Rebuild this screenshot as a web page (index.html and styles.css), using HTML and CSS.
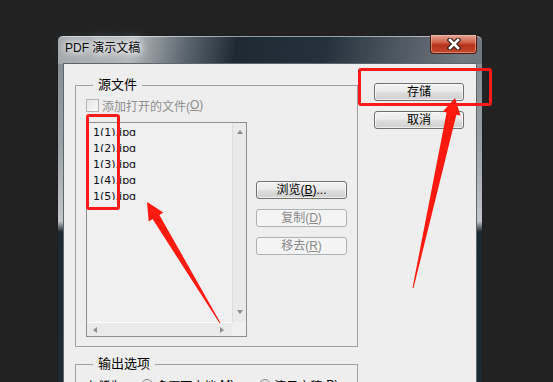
FILE: index.html
```html
<!DOCTYPE html>
<html lang="zh-CN">
<head>
    <meta charset="UTF-8">
    <meta name="viewport" content="width=device-width, initial-scale=1.0">
    <title>PDF 演示文稿</title>
    <link rel="stylesheet" href="styles.css">
</head>
<body>
    <div class="window">
        <div class="titlebar">
            <span class="title">PDF 演示文稿</span>
            <div class="close">
                <svg width="14" height="12" viewBox="0 0 14 12">
                    <path d="M3 2 L11 10 M11 2 L3 10" stroke="#3a2420" stroke-width="5" stroke-linecap="square"/>
                    <path d="M3 2 L11 10 M11 2 L3 10" stroke="#fff" stroke-width="2.6" stroke-linecap="square"/>
                </svg>
            </div>
        </div>
        <div class="client">
            <div class="groups">
                <fieldset class="group source">
                    <legend>源文件</legend>
                    <label class="check disabled"><span class="box"></span>添加打开的文件(<u>O</u>)</label>
                    <div class="source-row">
                        <div class="listbox">
                            <div class="items">
                                <div class="item">1(1).jpg</div>
                                <div class="item">1(2).jpg</div>
                                <div class="item">1(3).jpg</div>
                                <div class="item">1(4).jpg</div>
                                <div class="item">1(5).jpg</div>
                            </div>
                            <div class="vscroll"><span class="arrow up"></span><span class="arrow down"></span></div>
                            <div class="hscroll"><span class="arrow left"></span><span class="arrow right"></span></div>
                            <div class="corner"></div>
                        </div>
                        <div class="side-buttons">
                            <button class="btn">浏览(<u>B</u>)...</button>
                            <button class="btn" disabled>复制(<u>D</u>)</button>
                            <button class="btn" disabled>移去(<u>R</u>)</button>
                        </div>
                    </div>
                </fieldset>
                <fieldset class="group output">
                    <legend>输出选项</legend>
                    <div class="radio-row">
                        <span>存储为:</span>
                        <label class="radio first"><span class="dot"></span>多页面文档(<u>M</u>)</label>
                        <label class="radio second"><span class="dot"></span>演示文稿(<u>P</u>)</label>
                    </div>
                </fieldset>
            </div>
            <div class="main-buttons">
                <button class="btn wide">存储</button>
                <button class="btn wide">取消</button>
            </div>
        </div>
    </div>

    <div class="mark mark-list"></div>
    <div class="mark mark-save"></div>
    <svg class="arrows" width="553" height="382" viewBox="0 0 553 382">
        <polygon fill="#ff1a10" points="147,202 163.3,212.6 159.4,214.9 220.4,322.7 219.6,323.3 152.6,219.1 148.7,221.4"/>
        <polygon fill="#ff1a10" points="455,98 460.5,115.5 456.4,114.7 413.5,288.1 412.5,287.9 446.6,112.5 442.7,111.7"/>
    </svg>
</body>
</html>
```

FILE: styles.css
```css
html,body{
    margin: 0;
    height: 100%;
    overflow: hidden;
}
body{
    position: relative;
    box-sizing: border-box;
    padding: 35px 0 0 57px;
    background: #222222;
    font-family: "Liberation Sans", "Noto Sans CJK SC", sans-serif;
    font-size: 12px;
    color: #000;
}
.window{
    width: 426px;
    height: 380px;
    box-sizing: border-box;
    border: 1px solid #1b1f23;
    border-radius: 6px 6px 0 0;
    padding: 0 5px;
    background:
        linear-gradient(100deg, #a3a8ac 0, #b2b6b9 75px, #5c666f 128px, #1e2933 178px, #24313c 265px, #4d5760 335px, #70777e 400px) top left / 100% 28px no-repeat,
        linear-gradient(180deg, #80878d 0, #9ca1a5 110px, #c4c7c9 185px, #1d2730 196px, #1f2a33 100%);
    box-shadow: inset 0 1px 0 rgba(255,255,255,.55);
}
.titlebar{
    display: flex;
    align-items: flex-start;
    height: 27px;
}
.title{
    padding: 4px 0 0 2px;
    line-height: 16px;
    font-size: 12px;
    color: #0a0a0a;
    text-shadow: 0 0 6px #fff, 0 0 10px #fff, 0 0 14px rgba(255,255,255,.8);
}
.close{
    margin-left: auto;
    margin-top: -1px;
    width: 47px;
    height: 19px;
    box-sizing: border-box;
    border: 1px solid #4d1a10;
    border-top: none;
    border-radius: 0 0 4px 4px;
    background: linear-gradient(#e6a797 0, #d0644c 40%, #b5321a 55%, #c4482e 100%);
    box-shadow: inset 0 0 0 1px rgba(255,210,200,.45);
    display: flex;
    align-items: center;
    justify-content: center;
}
.client{
    display: flex;
    height: 340px;
    box-sizing: border-box;
    padding: 13px 0 0 11px;
    border: 1px solid #5e666d;
    background: #eeeeee;
}
.groups{
    width: 283px;
}
.group{
    margin: 0;
    min-width: 0;
    border: 1px solid #a0a0a0;
    padding: 4px 10px 9px;
}
.group legend{
    margin-left: 7px;
    padding: 0 5px;
    font-size: 13px;
    line-height: 16px;
}
.output{
    margin-top: 9px;
    padding-top: 5px;
}
.check{
    display: flex;
    align-items: center;
    height: 16px;
    color: #8f8f8f;
}
.box{
    width: 13px;
    height: 13px;
    box-sizing: border-box;
    margin-right: 3px;
    border: 1px solid #b4b4b4;
    background: linear-gradient(135deg, #e4e4e4, #fbfbfb);
}
.source-row{
    display: flex;
    margin-top: 9px;
}
.listbox{
    width: 161px;
    height: 215px;
    box-sizing: border-box;
    border: 1px solid #8e8e8e;
    display: grid;
    grid-template-columns: 1fr 14px;
    grid-template-rows: 1fr 14px;
    background: #f0f0f0;
}
.items{
    padding: 4px 0 0 6px;
    font-family: "DejaVu Sans", sans-serif;
    font-size: 11px;
    color: #0c0c16;
}
.item{
    height: 9px;
    line-height: 11px;
    overflow: hidden;
    margin-bottom: 7px;
}
.vscroll{
    display: flex;
    flex-direction: column;
    align-items: center;
    justify-content: space-between;
    padding: 7px 0 8px;
    background: #eaeaea;
    border-left: 1px solid #dcdcdc;
}
.hscroll{
    display: flex;
    align-items: center;
    justify-content: space-between;
    padding: 0 8px 0 6px;
    background: #eaeaea;
    border-top: 1px solid #fdfdfd;
}
.corner{
    background: #f0f0f0;
}
.arrow{
    width: 0;
    height: 0;
}
.arrow.up{
    border-left: 3px solid transparent;
    border-right: 3px solid transparent;
    border-bottom: 4px solid #8c8c8c;
}
.arrow.down{
    border-left: 3px solid transparent;
    border-right: 3px solid transparent;
    border-top: 4px solid #8c8c8c;
}
.arrow.left{
    border-top: 3px solid transparent;
    border-bottom: 3px solid transparent;
    border-right: 4px solid #8c8c8c;
}
.arrow.right{
    border-top: 3px solid transparent;
    border-bottom: 3px solid transparent;
    border-left: 4px solid #8c8c8c;
}
.side-buttons{
    display: flex;
    flex-direction: column;
    gap: 10px;
    margin-left: 9px;
    padding-top: 59px;
}
.btn{
    width: 91px;
    height: 18px;
    box-sizing: border-box;
    padding: 0;
    border: 1px solid #707070;
    border-radius: 3px;
    background: linear-gradient(#f2f2f2 0, #ebebeb 45%, #dddddd 55%, #cfcfcf 100%);
    box-shadow: inset 0 0 0 1px rgba(255,255,255,.65);
    font-family: "Liberation Sans", "Noto Sans CJK SC", sans-serif;
    font-size: 12px;
    line-height: 16px;
    color: #000;
}
.btn:disabled{
    border-color: #adb2b5;
    background: #f4f4f4;
    box-shadow: none;
    color: #8a8a8a;
}
.btn u{
    text-underline-offset: 1px;
}
.main-buttons{
    display: flex;
    flex-direction: column;
    gap: 10px;
    margin-left: 16px;
    padding-top: 6px;
}
.btn.wide{
    width: 90px;
}
.radio-row{
    display: flex;
    align-items: center;
    height: 16px;
}
.radio{
    display: flex;
    align-items: center;
}
.radio.first{
    margin-left: 16px;
}
.radio.second{
    margin-left: 25px;
}
.dot{
    width: 12px;
    height: 12px;
    box-sizing: border-box;
    margin-right: 3px;
    border: 1px solid #8a8a8a;
    border-radius: 50%;
    background: linear-gradient(135deg, #dcdcdc, #fafafa);
}
.mark{
    position: absolute;
    box-sizing: border-box;
    border: 3px solid #ff1a1a;
    border-radius: 3px;
}
.mark-list{
    left: 86px;
    top: 114px;
    width: 34px;
    height: 96px;
}
.mark-save{
    left: 358px;
    top: 68px;
    width: 134px;
    height: 38px;
}
.arrows{
    position: absolute;
    left: 0;
    top: 0;
    pointer-events: none;
}
```
